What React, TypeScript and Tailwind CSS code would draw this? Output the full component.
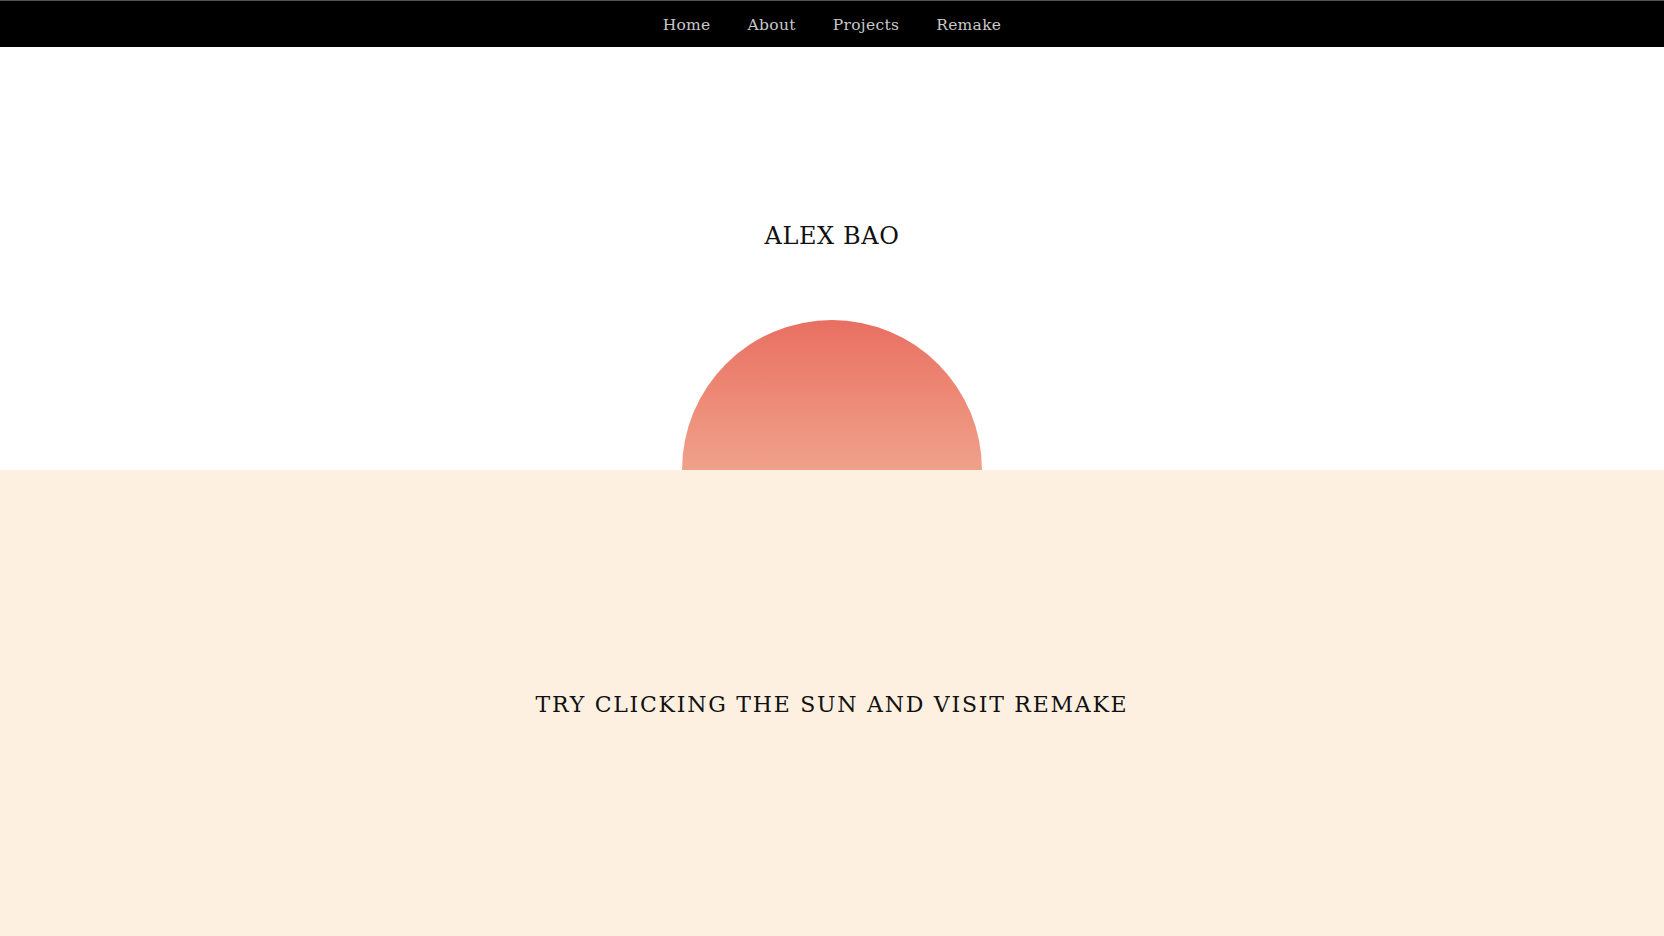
const navLinks = ['Home', 'About', 'Projects', 'Remake'];

const App = () => {
  return (
    <div className="min-h-screen flex flex-col bg-white" style={{ fontFamily: '"DejaVu Serif", "Liberation Serif", serif' }}>
      {/* Nav */}
      <nav className="h-[47px] bg-black border-t border-[#555] flex items-center justify-center gap-[37px]">
        {navLinks.map((link) => (
          <a key={link} href="#" className="text-[15.5px] leading-[22px] text-[#c8c8c8] font-light tracking-[0.3px] pt-[1px]">
            {link}
          </a>
        ))}
      </nav>

      {/* Sky */}
      <section className="h-[423px] flex flex-col items-center pt-[173px]">
        <h1 className="text-[24px] leading-[32px] text-[#111] tracking-[0.6px]">ALEX BAO</h1>
        <button
          type="button"
          className="mt-auto w-[300px] h-[150px] rounded-t-full bg-gradient-to-b from-[#e86f61] to-[#f0a18a]"
          aria-label="sun"
        />
      </section>

      {/* Sea */}
      <section className="h-[466px] bg-[#fdf0e0] flex flex-col items-center pt-[220px]">
        <h2 className="text-[22px] leading-[30px] text-[#111] tracking-[1.75px]">TRY CLICKING THE SUN AND VISIT REMAKE</h2>
      </section>
    </div>
  );
};

export default App;
